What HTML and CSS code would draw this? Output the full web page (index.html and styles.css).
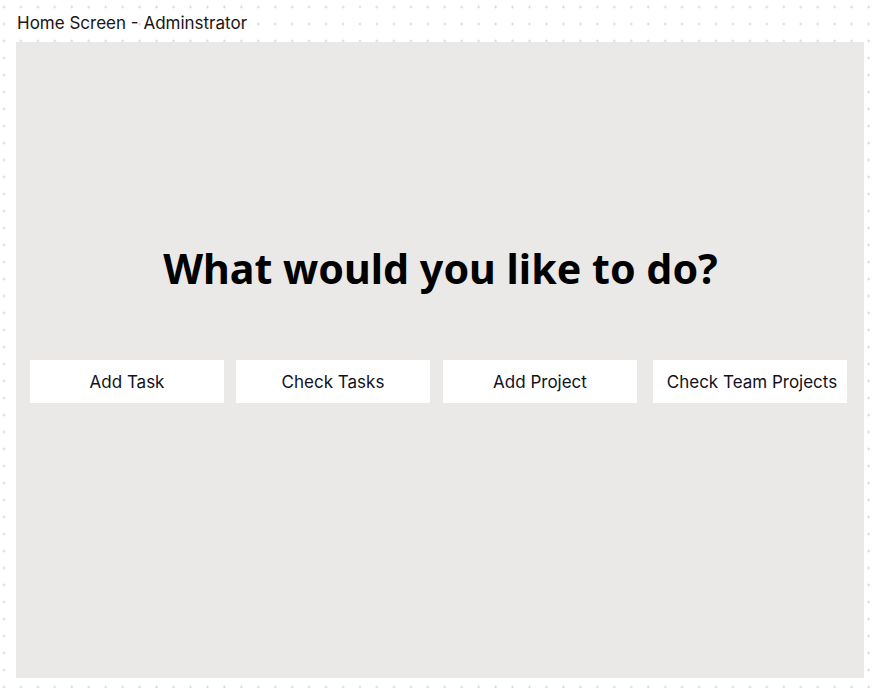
FILE: index.html
```html
<!DOCTYPE html>
<html lang="en">
<head>
<meta charset="utf-8">
<title>Home Screen - Adminstrator</title>
<link rel="stylesheet" href="styles.css">
</head>
<body>
  <div class="page">
    <div class="frame-title">Home Screen - Adminstrator</div>
    <main class="panel">
      <h1 class="heading">What would you like to do?</h1>
      <div class="actions">
        <button class="action">Add Task</button>
        <button class="action">Check Tasks</button>
        <button class="action action--gap13">Add Project</button>
        <button class="action action--gap16">Check Team Projects</button>
      </div>
    </main>
  </div>
</body>
</html>
```
FILE: styles.css
```css
html, body {
  margin: 0;
  padding: 0;
}
body {
  width: 875px;
  height: 688px;
  overflow: hidden;
  background-color: #ffffff;
  background-image: radial-gradient(circle at center, #d8dbe0 0, #d8dbe0 1px, rgba(255,255,255,0) 1.3px);
  background-size: 16.96px 17px;
  background-position: -4.5px -1.5px;
  font-family: "Noto Sans", "Open Sans", sans-serif;
  color: #111111;
}
.page {
  padding: 13px 11px 0 16px;
}
.frame-title {
  font-family: Inter, "Noto Sans", sans-serif;
  font-size: 17px;
  line-height: 21px;
  height: 29px;
  padding-left: 1px;
  color: #1a1414;
}
.panel {
  width: 848px;
  height: 636px;
  background: #ebe9e7;
  box-sizing: border-box;
  display: flex;
  flex-direction: column;
  padding-top: 201px;
}
.heading {
  margin: 0;
  text-align: center;
  font-size: 41.2px;
  line-height: 50px;
  font-weight: 700;
  color: #000;
  padding-left: 1px;
}
.actions {
  display: flex;
  gap: 12px;
  padding-left: 14px;
  margin-top: 67px;
}
.action {
  width: 194px;
  height: 43px;
  border: 0;
  background: #ffffff;
  font-family: Inter, "Noto Sans", sans-serif;
  font-size: 17px;
  color: #111122;
  padding: 0;
}
.action--gap13 {
  margin-left: 1px;
}
.action--gap16 {
  margin-left: 4px;
  padding-left: 4px;
}
```
